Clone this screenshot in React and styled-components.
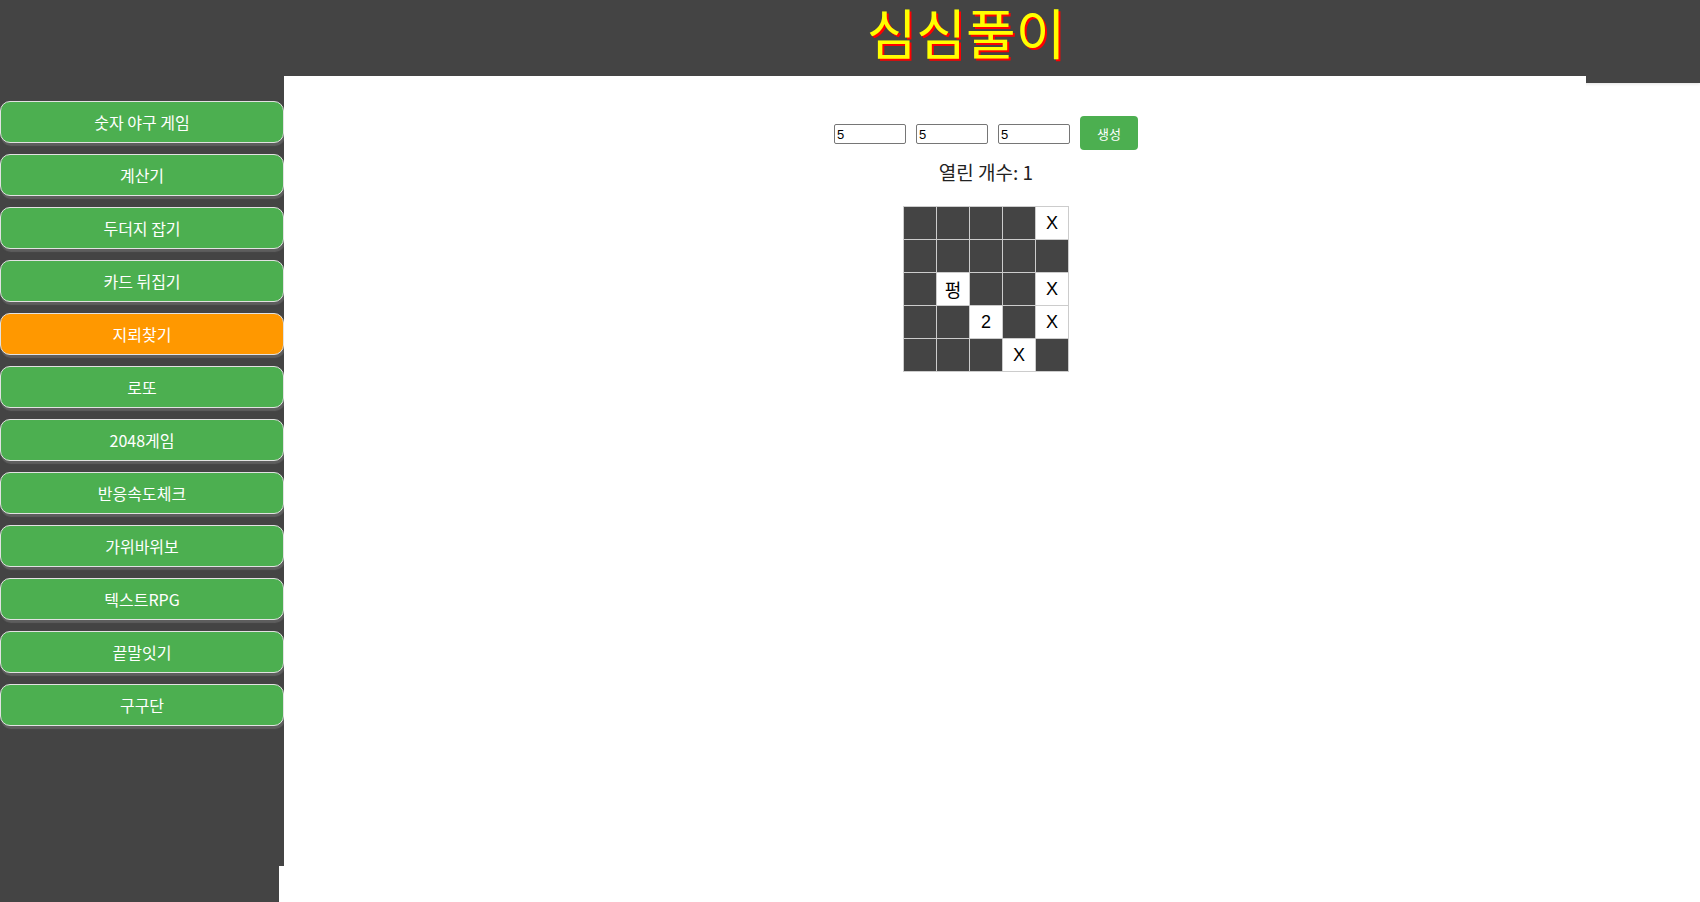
import React, { useState } from 'react';
import styled, { createGlobalStyle } from 'styled-components';

const GAMES = [
  '숫자 야구 게임',
  '계산기',
  '두더지 잡기',
  '카드 뒤집기',
  '지뢰찾기',
  '로또',
  '2048게임',
  '반응속도체크',
  '가위바위보',
  '텍스트RPG',
  '끝말잇기',
  '구구단',
];

// null = 닫힌 칸, 문자열 = 열린 칸의 표시
const BOARD = [
  [null, null, null, null, 'X'],
  [null, null, null, null, null],
  [null, '펑', null, null, 'X'],
  [null, null, '2', null, 'X'],
  [null, null, null, 'X', null],
];

export default function App() {
  const [active, setActive] = useState('지뢰찾기');

  return (
    <>
      <GlobalStyle />
      <Page>
        <Header>
          <Title>심심풀이</Title>
        </Header>
        <Body>
          <Aside>
            <Nav>
              {GAMES.map((name) => (
                <NavButton
                  key={name}
                  $active={name === active}
                  onClick={() => setActive(name)}
                >
                  {name}
                </NavButton>
              ))}
            </Nav>
          </Aside>
          <Main>
            <Sheet>
              <Controls>
                <SizeInput defaultValue="5" />
                <SizeInput defaultValue="5" />
                <SizeInput defaultValue="5" />
                <MakeButton>생성</MakeButton>
              </Controls>
              <OpenCount>열린 개수: 1</OpenCount>
              <Board>
                {BOARD.map((row, r) =>
                  row.map((cell, c) => (
                    <Cell key={`${r}-${c}`} $open={cell !== null}>
                      {cell}
                    </Cell>
                  ))
                )}
              </Board>
            </Sheet>
          </Main>
        </Body>
      </Page>
    </>
  );
}

// --- STYLED COMPONENTS ---

const GlobalStyle = createGlobalStyle`
  * {
    box-sizing: border-box;
  }

  body {
    margin: 0;
    background: #ffffff;
    font-family: "Noto Sans CJK KR", "Noto Sans", sans-serif;
    overflow: hidden;
  }
`;

const Page = styled.div`
  display: flex;
  flex-direction: column;
  min-height: 100vh;
`;

const Header = styled.header`
  height: 83px;
  flex-shrink: 0;
  background-color: #444444;
  box-shadow: 0 1px 3px rgba(0, 0, 0, 0.12);
  padding-left: 232px;
  text-align: center;
`;

const Title = styled.h1`
  margin: 0;
  font-size: 54px;
  line-height: 64px;
  font-weight: 400;
  color: #ffff00;
  text-shadow: 2px 2px 0 #ff0000;
`;

const Body = styled.div`
  display: flex;
  flex: 1;
  margin-top: -7px;
`;

const Aside = styled.aside`
  width: 279px;
  flex-shrink: 0;
  background-color: #444444;
`;

const Nav = styled.nav`
  width: 284px;
  height: 790px;
  background-color: #444444;
  padding-top: 25px;
  display: flex;
  flex-direction: column;
  gap: 11px;
`;

const NavButton = styled.button`
  width: 100%;
  height: 42px;
  border: 1px solid #e2e2e2;
  border-radius: 10px;
  background-color: ${(p) => (p.$active ? '#ff9800' : '#4caf50')};
  color: #ffffff;
  font-family: "Noto Sans CJK KR", sans-serif;
  font-size: 16px;
  box-shadow: 1px 3px 1px #5e5e5e;
  cursor: pointer;
`;

const Main = styled.main`
  flex: 1;
  margin-left: 5px;
  display: flex;
`;

const Sheet = styled.section`
  width: 1302px;
  background-color: #ffffff;
  padding: 40px 0 0 102px;
  display: flex;
  flex-direction: column;
  align-items: center;
`;

const Controls = styled.div`
  display: flex;
  align-items: center;
  gap: 10px;
`;

const SizeInput = styled.input`
  width: 72px;
  height: 20px;
  margin-top: 2px;
  padding: 1px 2px;
  border: 1px solid #767676;
  border-radius: 2px;
  font-family: "Liberation Sans", Arial, sans-serif;
  font-size: 13px;
  color: #000000;
`;

const MakeButton = styled.button`
  width: 58px;
  height: 34px;
  border: none;
  border-radius: 4px;
  background-color: #4caf50;
  color: #ffffff;
  font-family: "Noto Sans CJK KR", sans-serif;
  font-size: 13px;
  cursor: pointer;
`;

const OpenCount = styled.div`
  margin-top: 9px;
  font-size: 19px;
  line-height: 26px;
  color: #222222;
`;

const Board = styled.div`
  margin-top: 21px;
  display: grid;
  grid-template-columns: repeat(5, 32px);
  grid-auto-rows: 32px;
  gap: 1px;
  padding: 1px;
  background-color: #cccccc;
`;

const Cell = styled.div`
  display: flex;
  align-items: center;
  justify-content: center;
  background-color: ${(p) => (p.$open ? '#ffffff' : '#444444')};
  color: #000000;
  font-family: "Liberation Sans", "Noto Sans CJK KR", sans-serif;
  font-size: 18px;
`;
